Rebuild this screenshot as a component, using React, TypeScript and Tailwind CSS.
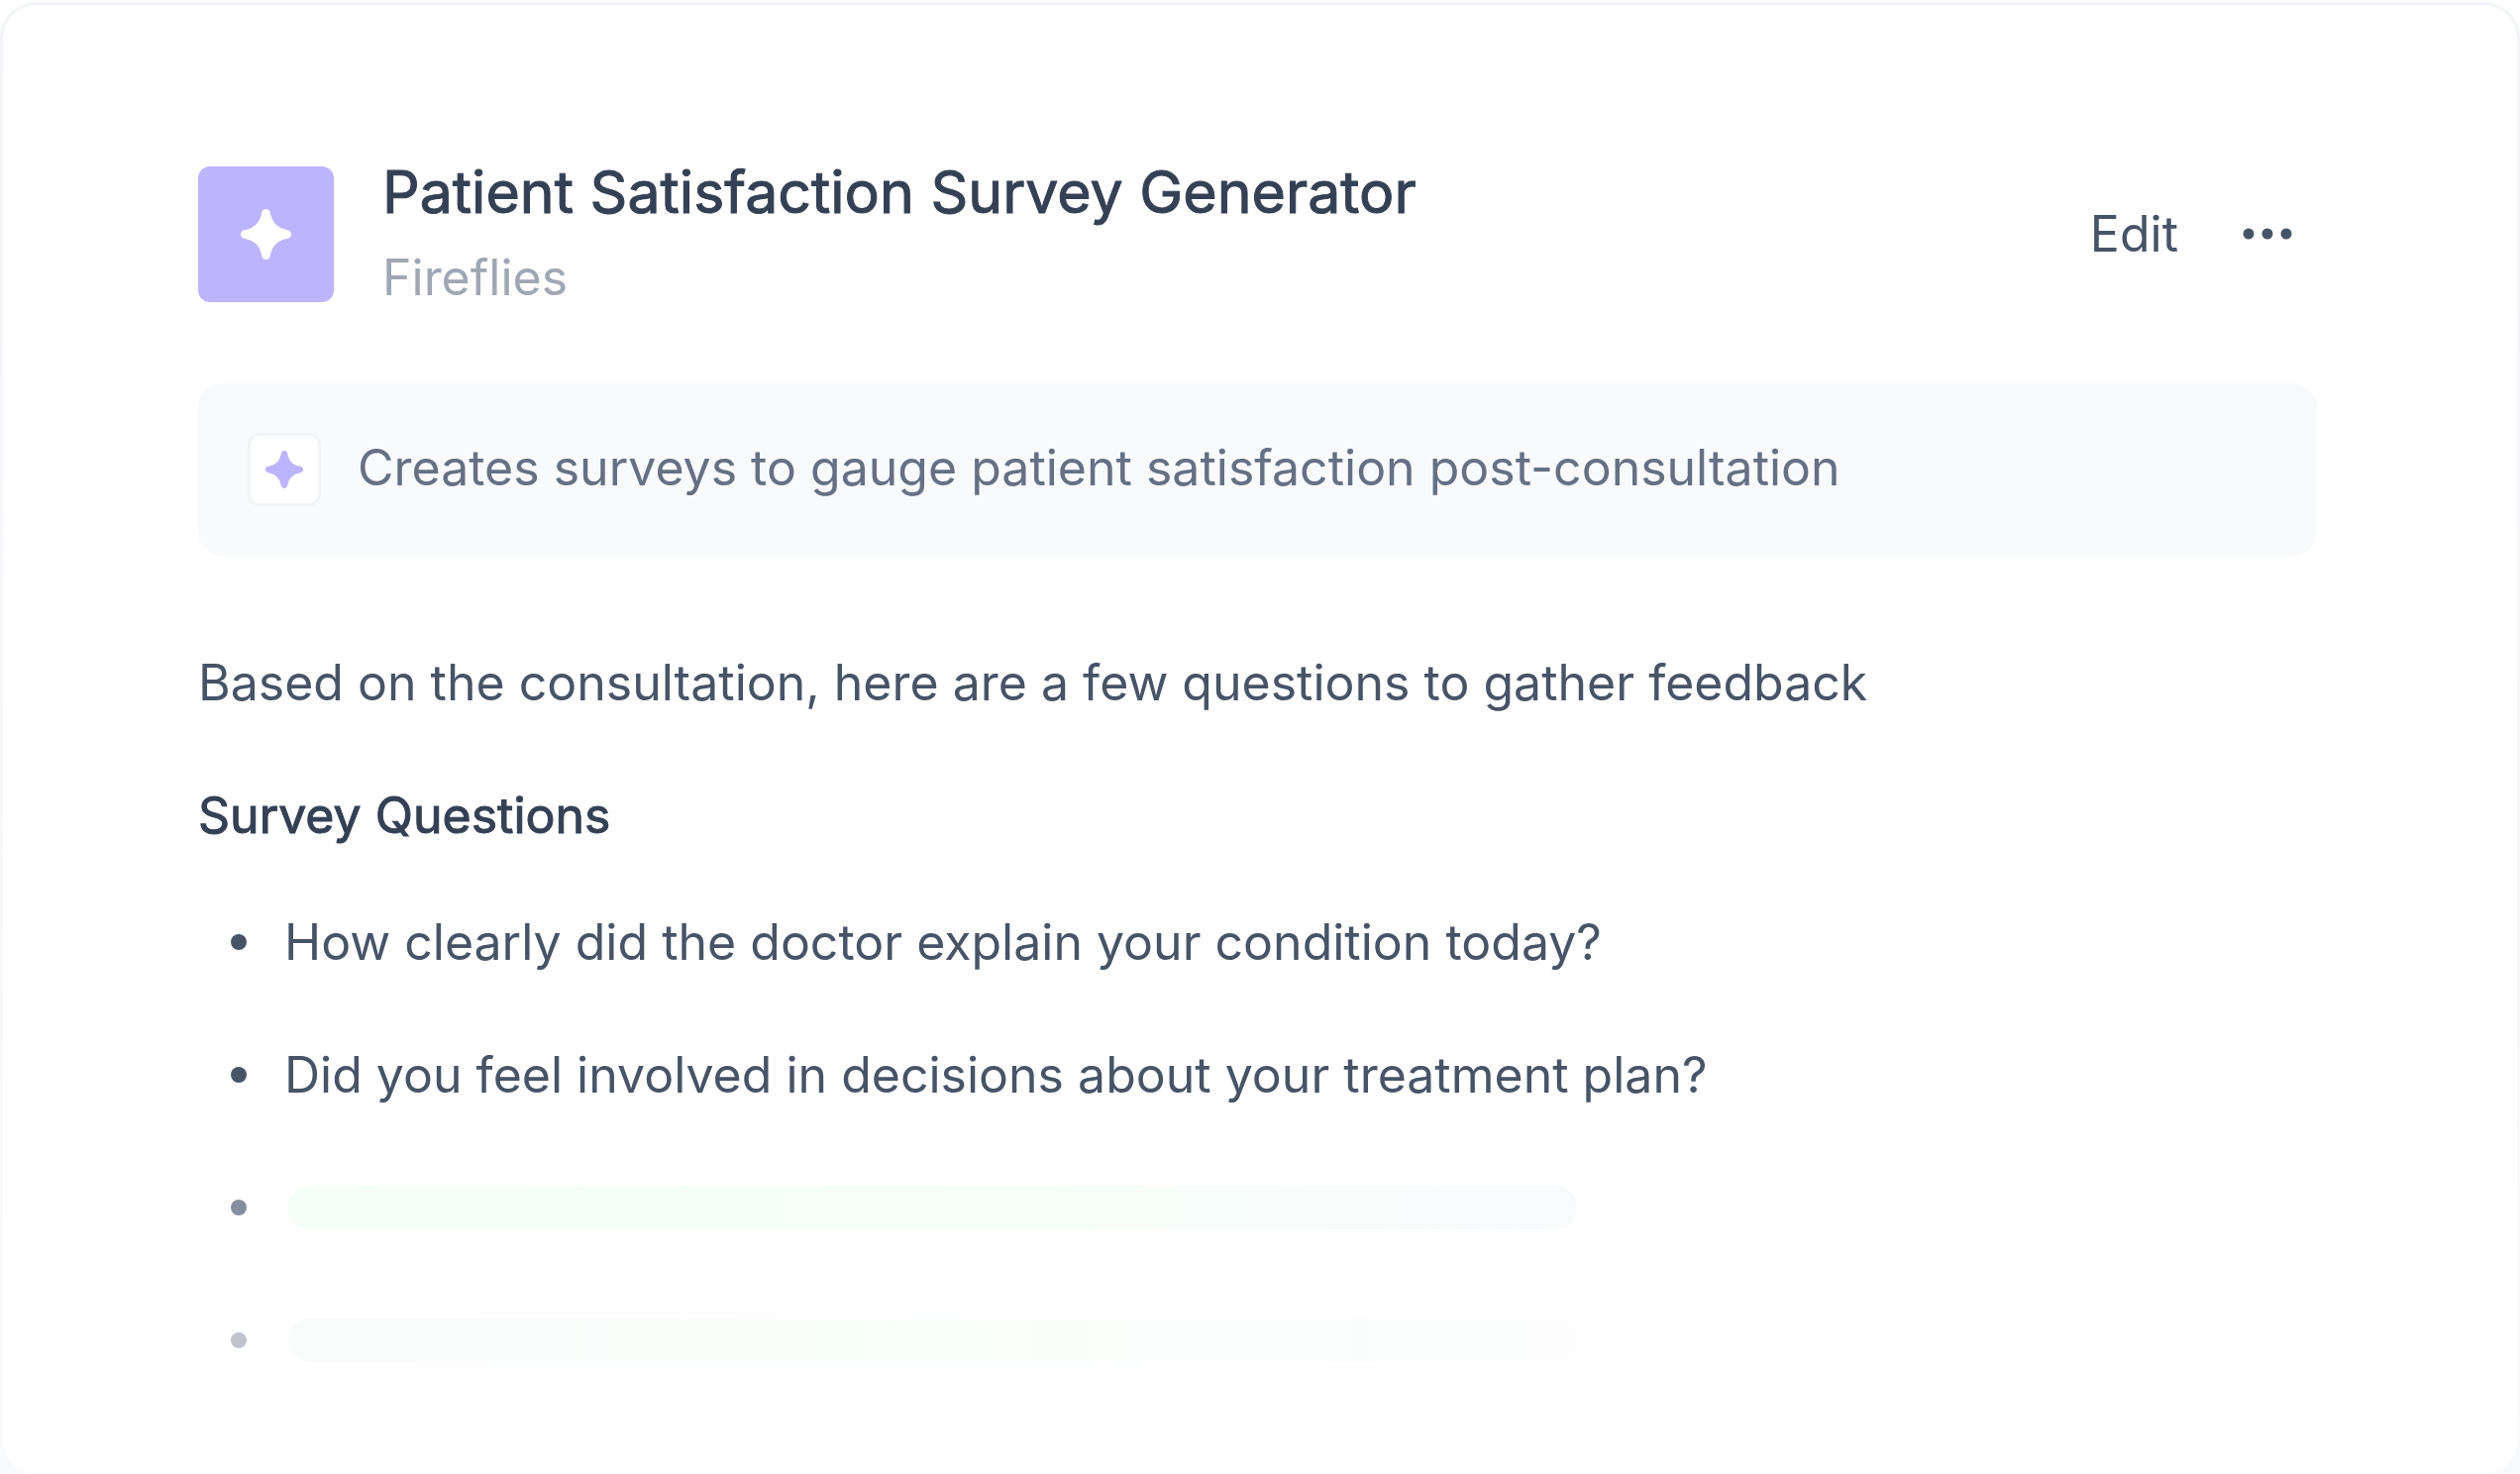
import React from "react";

interface StarProps {
  className: string;
}

interface QuestionProps {
  text: string;
}

interface PlaceholderProps {
  dotClass: string;
  barClass: string;
}

const questions = [
  "How clearly did the doctor explain your condition today?",
  "Did you feel involved in decisions about your treatment plan?",
];

const Star = ({ className }: StarProps) => {
  return (
    <svg viewBox="0 0 51 51" fill="currentColor" className={className} aria-hidden="true">
      <path d="M25.5 0C27.6 0 29.2 1.4 29.7 3.6C31.8 14 37 19.3 47.4 21.3C49.6 21.8 51 23.4 51 25.5C51 27.6 49.6 29.2 47.4 29.7C37 31.7 31.8 37 29.7 47.4C29.2 49.6 27.6 51 25.5 51C23.4 51 21.8 49.6 21.3 47.4C19.2 37 14 31.7 3.6 29.7C1.4 29.2 0 27.6 0 25.5C0 23.4 1.4 21.8 3.6 21.3C14 19.3 19.2 14 21.3 3.6C21.8 1.4 23.4 0 25.5 0Z" />
    </svg>
  );
};

const Question = ({ text }: QuestionProps) => {
  return (
    <li className="flex items-center gap-[38px] h-[134px]">
      <span className="w-4 h-4 rounded-full bg-[#475467]" />
      {text}
    </li>
  );
};

const Placeholder = ({ dotClass, barClass }: PlaceholderProps) => {
  return (
    <li className="flex items-center gap-[42px] h-[134px]">
      <span className={`w-4 h-4 rounded-full ${dotClass}`} />
      <span className={`w-full max-w-[1301px] h-[44px] rounded-full bg-linear-to-r ${barClass}`} />
    </li>
  );
};

const App = () => {
  return (
    <div className="flex min-h-screen pt-[2px] bg-white font-['Inter',sans-serif] text-[50px] leading-[60px] text-[#475467]">
      <div className="flex flex-1 rounded-t-[36px] bg-linear-to-b from-[#f2f4f7] to-[#f9fafb] px-[3px] pt-[3px]">
        <main className="flex-1 rounded-[34px] bg-white pl-[197px] pr-[202px] pt-[157px]">
          <header className="flex items-center gap-[49px]">
            <div className="flex items-center justify-center w-[137px] h-[137px] rounded-xl bg-[#bdb4fe] text-white">
              <Star className="w-[51px] h-[51px]" />
            </div>
            <div className="flex-1">
              <h1 className="text-[59px] leading-[64px] font-normal text-[#344054] [-webkit-text-stroke:1px]">
                Patient Satisfaction Survey Generator
              </h1>
              <p className="pt-6 text-[#a0a7b4]">Fireflies</p>
            </div>
            <div className="flex items-center gap-[60px] pr-[20px]">
              <button>Edit</button>
              <button aria-label="More options">
                <svg viewBox="0 0 60 20" fill="currentColor" className="w-[60px] h-[20px]">
                  <circle cx="11" cy="10" r="5.5" />
                  <circle cx="30" cy="10" r="5.5" />
                  <circle cx="49" cy="10" r="5.5" />
                </svg>
              </button>
            </div>
          </header>

          <div className="flex items-center gap-[37px] mt-[77px] h-[174px] px-[50px] rounded-3xl bg-[#f9fafc] text-[#667085]">
            <div className="flex items-center justify-center w-[74px] h-[74px] rounded-xl border-[3px] border-[#f2f4f7] bg-white text-[#bdb4fe]">
              <Star className="w-[38px] h-[38px]" />
            </div>
            <p className="pb-1">Creates surveys to gauge patient satisfaction post-consultation</p>
          </div>

          <p className="mt-[98px]">
            Based on the consultation, here are a few questions to gather feedback
          </p>
          <h2 className="mt-[74px] font-normal text-[#344054] [-webkit-text-stroke:1px]">
            Survey Questions
          </h2>

          <ul className="mt-[31px] pl-[33px]">
            {questions.map((question) => (
              <Question key={question} text={question} />
            ))}
            <Placeholder
              dotClass="bg-[#858e9e]"
              barClass="from-[#f3fff7] via-[#f5fff8] to-[#f9fafc]"
            />
            <Placeholder
              dotClass="bg-[#c0c5cd]"
              barClass="from-[#f9fcfb] via-[#f9fffb] to-[#fdfdfe]"
            />
          </ul>
        </main>
      </div>
    </div>
  );
};

export default App;
